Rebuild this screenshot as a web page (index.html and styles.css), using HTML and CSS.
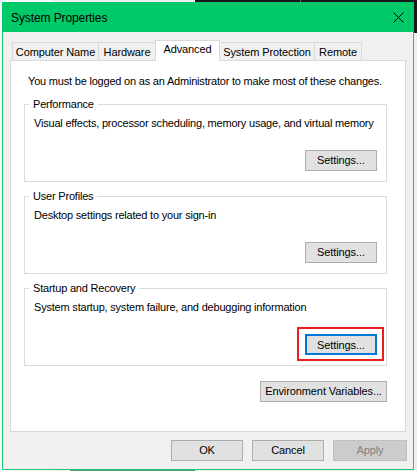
FILE: index.html
```html
<!DOCTYPE html>
<html lang="en">
<head>
<meta charset="utf-8">
<title>System Properties</title>
<link rel="stylesheet" href="styles.css">
</head>
<body>
<div class="desktop">
  <div class="backdrop backdrop-left"></div>
  <div class="backdrop backdrop-dark"></div>
  <div class="backdrop backdrop-dark-line"></div>
  <div class="backdrop backdrop-taskbar"></div>

  <div class="dialog">
    <div class="titlebar">
      <span class="title">System Properties</span>
      <svg class="close" width="11" height="11" viewBox="0 0 11 11" aria-hidden="true">
        <path d="M0.5 0.5 L10.5 10.5 M10.5 0.5 L0.5 10.5" stroke="#000" stroke-width="1" fill="none"/>
      </svg>
    </div>

    <div class="content">
      <div class="tabs">
        <div class="tab tab-computer">Computer Name</div>
        <div class="tab tab-hardware">Hardware</div>
        <div class="tab tab-advanced is-active">Advanced</div>
        <div class="tab tab-protection">System Protection</div>
        <div class="tab tab-remote">Remote</div>
      </div>

      <div class="panel">
        <p class="intro">You must be logged on as an Administrator to make most of these changes.</p>

        <fieldset class="group">
          <legend>Performance</legend>
          <p class="group-text">Visual effects, processor scheduling, memory usage, and virtual memory</p>
          <div class="group-actions"><button class="btn">Settings...</button></div>
        </fieldset>

        <fieldset class="group">
          <legend>User Profiles</legend>
          <p class="group-text">Desktop settings related to your sign-in</p>
          <div class="group-actions"><button class="btn">Settings...</button></div>
        </fieldset>

        <fieldset class="group">
          <legend>Startup and Recovery</legend>
          <p class="group-text">System startup, system failure, and debugging information</p>
          <div class="group-actions">
            <span class="highlight"><button class="btn is-focused">Settings...</button></span>
          </div>
        </fieldset>

        <div class="env-row"><button class="btn btn-env">Environment Variables...</button></div>
      </div>

      <div class="actions">
        <button class="btn">OK</button>
        <button class="btn">Cancel</button>
        <button class="btn" disabled>Apply</button>
      </div>
    </div>
  </div>
</div>
</body>
</html>
```

FILE: styles.css
```css
* {
  box-sizing: border-box;
}

html, body {
  margin: 0;
  padding: 0;
}

body {
  width: 417px;
  height: 471px;
  overflow: hidden;
  background: #efefef;
  font-family: "Liberation Sans", Arial, sans-serif;
  font-size: 11px;
  letter-spacing: -0.2px;
  color: #000;
}

.desktop {
  position: relative;
  width: 417px;
  height: 471px;
}

/* windows lying behind the dialog */
.backdrop {
  position: absolute;
}

.backdrop-left {
  left: 0;
  top: 0;
  width: 53px;
  height: 471px;
  background: #f9f9f9;
}

.backdrop-dark {
  left: 195px;
  top: 0;
  width: 222px;
  height: 33px;
  background: #191919;
}

.backdrop-dark-line {
  left: 300px;
  top: 0;
  width: 1px;
  height: 3px;
  background: #6a6a6a;
}

.backdrop-taskbar {
  left: 70px;
  top: 470px;
  width: 125px;
  height: 1px;
  background: #4d9c76;
}

/* dialog window */
.dialog {
  position: absolute;
  left: 2px;
  top: 2px;
  width: 412px;
  height: 468px;
  background: #f0f0f0;
  border: 1px solid #1fc973;
  border-top: 0;
  display: flex;
  flex-direction: column;
}

.titlebar {
  height: 30px;
  margin: 0 -1px;
  background: #00c96a;
  display: flex;
  align-items: center;
  justify-content: space-between;
  padding: 0 10px 0 9px;
}

.title {
  font-size: 12px;
  letter-spacing: -0.1px;
  color: #000;
  padding-top: 1px;
  white-space: nowrap;
}

.close {
  display: block;
  margin-top: 1px;
}

.content {
  padding: 10px 7px 0 7px;
  display: flex;
  flex-direction: column;
}

/* tab strip */
.tabs {
  display: flex;
  height: 18px;
  margin-left: 2px;
  position: relative;
  z-index: 1;
}

.tab {
  height: 18px;
  border: 1px solid #d9d9d9;
  border-bottom: 0;
  background: #f0f0f0;
  text-align: center;
  line-height: 18px;
  margin-left: -1px;
  white-space: nowrap;
  letter-spacing: -0.1px;
  flex: none;
}

.tab:first-child {
  margin-left: 0;
}

.tab-computer { width: 87px; }
.tab-hardware { width: 58px; }
.tab-advanced { width: 65px; }
.tab-protection { width: 96px; }
.tab-remote { width: 48px; }

.tab.is-active {
  height: 21px;
  margin-top: -2px;
  background: #fff;
  line-height: 17px;
  position: relative;
  z-index: 2;
}

/* page of the active tab */
.panel {
  height: 372px;
  background: #fff;
  border: 1px solid #d9d9d9;
  padding: 0 18px 0 13px;
}

.intro {
  margin: 12px 0 7px 4px;
  line-height: 16px;
  white-space: nowrap;
}

.group {
  margin: 0 0 6px 0;
  padding: 0 9px 10px 9px;
  border: 1px solid #dcdcdc;
  min-width: 0;
}

.group + .group + .group {
  margin-top: 2px;
}

.group legend {
  margin-left: -5px;
  padding: 0 4px;
  line-height: 16px;
  white-space: nowrap;
}

.group-text {
  margin: 3px 0 0 0;
  line-height: 16px;
  white-space: nowrap;
}

.group-actions {
  display: flex;
  justify-content: flex-end;
  margin-top: 19px;
}

.highlight {
  position: relative;
  display: block;
}

/* red marker drawn around the focused button */
.highlight::after {
  content: "";
  position: absolute;
  left: -8px;
  right: -7px;
  top: -7px;
  bottom: -6px;
  border: 2px solid #ec1c24;
  pointer-events: none;
}

/* push buttons */
.btn {
  width: 72px;
  height: 21px;
  padding: 0;
  margin: 0;
  background: #e1e1e1;
  border: 1px solid #adadad;
  border-radius: 0;
  font-family: inherit;
  font-size: 11px;
  letter-spacing: -0.1px;
  color: #000;
  line-height: 19px;
  white-space: nowrap;
  display: block;
}

.btn.is-focused {
  border: 2px solid #0078d7;
}

.btn:disabled {
  background: #cccccc;
  border-color: #bfbfbf;
  color: #838383;
}

.env-row {
  display: flex;
  justify-content: flex-end;
  margin-top: 15px;
}

.btn-env {
  width: 127px;
}

.actions {
  display: flex;
  justify-content: flex-end;
  gap: 9px;
  margin-top: 8px;
}

.actions .btn:last-child {
  width: 74px;
  margin-right: -1px;
}
```
